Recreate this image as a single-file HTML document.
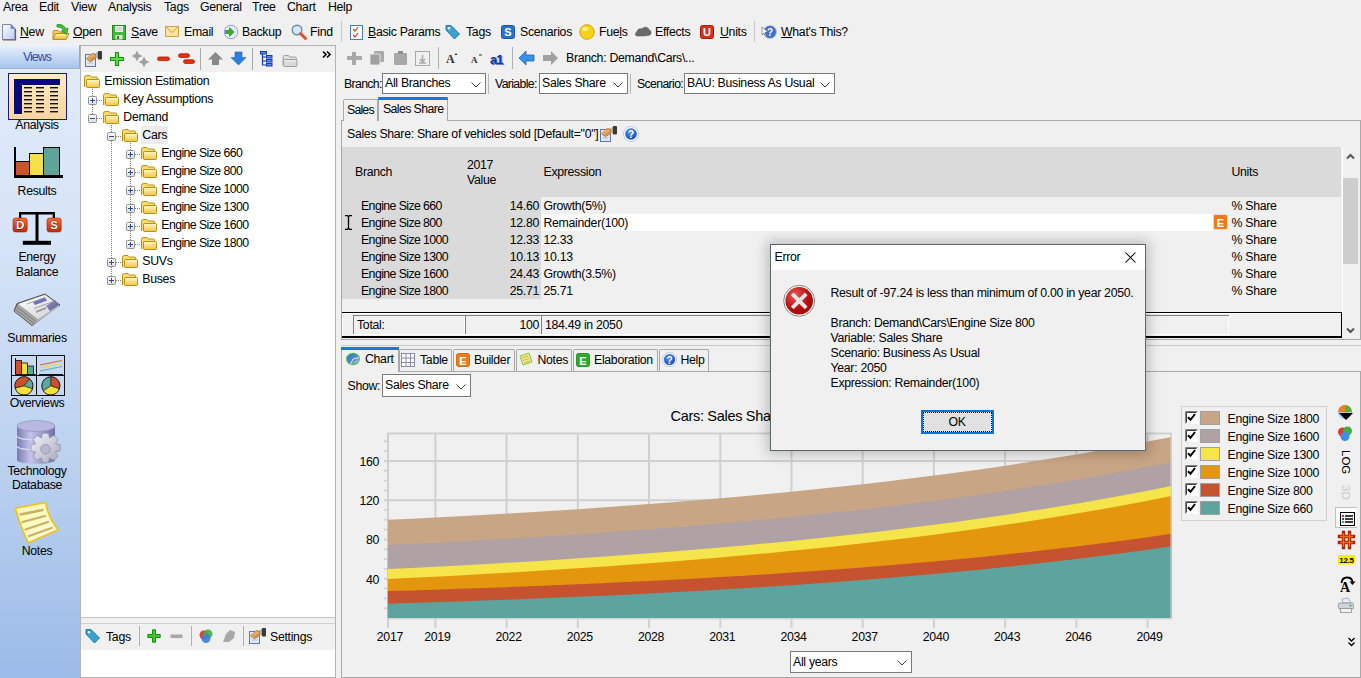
<!DOCTYPE html><html><head><meta charset="utf-8"><style>
html,body{margin:0;padding:0;width:1361px;height:678px;overflow:hidden;background:#f0f0f0;position:relative;font-family:"Liberation Sans", sans-serif;font-size:12.3px;color:#000}
.t{position:absolute;white-space:nowrap;line-height:1.2;letter-spacing:-0.3px}
svg{overflow:visible}
</style></head><body>
<div class="t" style="left:3px;top:-0.13px;font-size:12.3px;color:#000;">Area</div>
<div class="t" style="left:39px;top:-0.13px;font-size:12.3px;color:#000;">Edit</div>
<div class="t" style="left:71px;top:-0.13px;font-size:12.3px;color:#000;">View</div>
<div class="t" style="left:108px;top:-0.13px;font-size:12.3px;color:#000;">Analysis</div>
<div class="t" style="left:164px;top:-0.13px;font-size:12.3px;color:#000;">Tags</div>
<div class="t" style="left:200px;top:-0.13px;font-size:12.3px;color:#000;">General</div>
<div class="t" style="left:252px;top:-0.13px;font-size:12.3px;color:#000;">Tree</div>
<div class="t" style="left:287px;top:-0.13px;font-size:12.3px;color:#000;">Chart</div>
<div class="t" style="left:328px;top:-0.13px;font-size:12.3px;color:#000;">Help</div>
<svg style="position:absolute;left:2px;top:24px" width="14" height="17" viewBox="0 0 14 17"><defs><linearGradient id="gn" x1="0" y1="0" x2="1" y2="1"><stop offset="0" stop-color="#fff"/><stop offset="1" stop-color="#b8c8f0"/></linearGradient></defs><path d="M.5 .5h8.5l4 4v11H.5z" fill="url(#gn)" stroke="#7888b0"/><path d="M9 .5v4h4" fill="#4a90e8" stroke="#6a88c0" stroke-width=".8"/><path d="M1 16h12.5V5" fill="none" stroke="#606078" stroke-width="1.2"/></svg>
<div class="t" style="left:20px;top:25.17px;font-size:12.3px;color:#000;"><u>N</u>ew</div>
<svg style="position:absolute;left:52px;top:23px" width="18" height="18" viewBox="0 0 18 18"><defs><linearGradient id="gop" x1="0" y1="0" x2="0" y2="1"><stop offset="0" stop-color="#fff4b0"/><stop offset="1" stop-color="#e8b830"/></linearGradient></defs><path d="M1 16.5V8.5q0-1 1-1h4l1.5 1.5h5v2" fill="#f0d060" stroke="#b8901a"/><path d="M1 16.5l2.5-6h13.5l-3 6z" fill="url(#gop)" stroke="#b8901a"/><path d="M5 1.5q6-1 9 4.5l2-1-1.5 6.5-5-3.5 2-.8q-2-3.5-6.5-3.2z" fill="#3cc030" stroke="#1f8a18" stroke-width=".7"/></svg>
<div class="t" style="left:73px;top:25.17px;font-size:12.3px;color:#000;"><u>O</u>pen</div>
<svg style="position:absolute;left:112px;top:25px" width="14" height="15" viewBox="0 0 14 15"><rect x=".5" y=".5" width="13" height="14" fill="#44b838" stroke="#2a8a22"/><rect x="3" y="1" width="8" height="6" fill="#f0f0f0"/><path d="M4 3h6M4 5h6" stroke="#b0b0b0" stroke-width=".8"/><rect x="3.5" y="10" width="7" height="4.5" fill="#d8e8d8"/><rect x="5" y="11" width="2" height="3" fill="#2a8a22"/></svg>
<div class="t" style="left:131px;top:25.17px;font-size:12.3px;color:#000;"><u>S</u>ave</div>
<svg style="position:absolute;left:165px;top:26px" width="14" height="12" viewBox="0 0 14 12"><rect x=".5" y=".5" width="13" height="10" fill="#f9e3a0" stroke="#c9a640"/><path d="M.5 .5l6.5 6 6.5-6" fill="none" stroke="#c9a640"/></svg>
<div class="t" style="left:184px;top:25.17px;font-size:12.3px;color:#000;">Email</div>
<svg style="position:absolute;left:223px;top:24px" width="15" height="16" viewBox="0 0 15 16"><circle cx="8" cy="8" r="6.8" fill="#e9eef7" stroke="#8fa1bf"/><path d="M2.5 6.5h4v-3l4.5 4.5-4.5 4.5v-3h-4z" fill="#35b030" stroke="#1f7a1c" stroke-width=".6"/></svg>
<div class="t" style="left:242px;top:25.17px;font-size:12.3px;color:#000;">Backup</div>
<svg style="position:absolute;left:291px;top:24px" width="16" height="16" viewBox="0 0 16 16"><circle cx="6" cy="6" r="4.8" fill="#d5e8f7" stroke="#6d8aa8" stroke-width="1.4"/><path d="M9.5 9.5l5 5" stroke="#e0502a" stroke-width="3" stroke-linecap="round"/></svg>
<div class="t" style="left:310px;top:25.17px;font-size:12.3px;color:#000;">Find</div>
<div style="position:absolute;left:341px;top:21px;width:1px;height:21px;background:#c8c8c8"></div>
<svg style="position:absolute;left:350px;top:25px" width="13" height="15" viewBox="0 0 13 15"><rect x=".5" y=".5" width="12" height="14" fill="#fff" stroke="#4a78c8"/><path d="M3 4l2 2 3-4M3 10l2 2 3-4" fill="none" stroke="#d23a2a" stroke-width="1.2"/></svg>
<div class="t" style="left:368px;top:25.17px;font-size:12.3px;color:#000;"><u>B</u>asic Params</div>
<svg style="position:absolute;left:445px;top:24px" width="16" height="16" viewBox="0 0 16 16"><path d="M1 6V1.5h5l8.5 8.5-5 5z" fill="#3aa0d0" stroke="#2378a8"/><circle cx="4" cy="4.3" r="1.2" fill="#fff"/></svg>
<div class="t" style="left:466px;top:25.17px;font-size:12.3px;color:#000;">Tags</div>
<svg style="position:absolute;left:501px;top:25px" width="14" height="14" viewBox="0 0 14 14"><rect x=".5" y=".5" width="13" height="13" rx="2" fill="#2a72d0" stroke="#1a52a0"/><text x="7" y="11.2" font-family="Liberation Sans" font-weight="bold" font-size="11" fill="#fff" text-anchor="middle">S</text></svg>
<div class="t" style="left:520px;top:25.17px;font-size:12.3px;color:#000;">Scenarios</div>
<svg style="position:absolute;left:579px;top:24px" width="16" height="16" viewBox="0 0 16 16"><circle cx="8" cy="8" r="7.3" fill="#f7d21a" stroke="#d6a800"/><ellipse cx="6" cy="5" rx="3" ry="2" fill="#fdf08a"/></svg>
<div class="t" style="left:599px;top:25.17px;font-size:12.3px;color:#000;">Fue<u>l</u>s</div>
<svg style="position:absolute;left:635px;top:26px" width="16" height="12" viewBox="0 0 16 12"><path d="M2 10c-2 0-2-4 0-4 0-3 3-4 5-3 2-3 7-2 7 1 2 0 3 3 1 5-2 1-11 1-13 1z" fill="#6a6a6a" stroke="#4a4a4a" stroke-width=".5"/></svg>
<div class="t" style="left:655px;top:25.17px;font-size:12.3px;color:#000;">Effects</div>
<svg style="position:absolute;left:700px;top:25px" width="14" height="14" viewBox="0 0 14 14"><rect x=".5" y=".5" width="13" height="13" rx="2" fill="#d8301e" stroke="#a01e10"/><text x="7" y="11.2" font-family="Liberation Sans" font-weight="bold" font-size="11" fill="#fff" text-anchor="middle">U</text></svg>
<div class="t" style="left:720px;top:25.17px;font-size:12.3px;color:#000;"><u>U</u>nits</div>
<div style="position:absolute;left:754px;top:21px;width:1px;height:21px;background:#c8c8c8"></div>
<svg style="position:absolute;left:761px;top:24px" width="16" height="16" viewBox="0 0 16 16"><circle cx="9" cy="8" r="6.5" fill="#3a6fd0" stroke="#b8c8e8"/><text x="9" y="12" font-family="Liberation Sans" font-weight="bold" font-size="10" fill="#fff" text-anchor="middle">?</text><path d="M1 3l6 5-3 .5 2 4-1 .5-2-4-2 2z" fill="#fff" stroke="#555" stroke-width=".6"/></svg>
<div class="t" style="left:781px;top:25.17px;font-size:12.3px;color:#000;"><u>W</u>hat's This?</div>
<div style="position:absolute;left:0px;top:45px;width:80px;height:633px;background:linear-gradient(#e2ecfa 0%,#d6e4f7 30%,#bcd2f0 65%,#9bbbe8 100%)"></div>
<div style="position:absolute;left:0px;top:45px;width:79px;height:23px;background:linear-gradient(#eaf2fd,#a6c4ee)"></div>
<div style="position:absolute;left:0px;top:68px;width:80px;height:1px;background:#a8b4c4"></div>
<div style="position:absolute;left:79px;top:45px;width:1px;height:23px;background:#a8a8a8"></div>
<div style="position:absolute;left:80px;top:45px;width:1px;height:633px;background:#b4b4b4"></div>
<div class="t" style="left:-63px;width:200px;text-align:center;top:49.87px;font-size:12.3px;color:#2a4fb0;letter-spacing:-0.9px">Views</div>
<svg style="position:absolute;left:8px;top:73px" width="60" height="48" viewBox="0 0 60 48"><defs><linearGradient id="ga" x1="0" y1="0" x2="0" y2="1"><stop offset="0" stop-color="#fdebc8"/><stop offset="1" stop-color="#fbd49a"/></linearGradient></defs><rect x=".5" y=".5" width="58" height="46" fill="url(#ga)" stroke="#1a1a80"/><path d="M6 6h46v6H14v29H6z" fill="#0a0a78"/><rect x="16" y="14" width="8" height="1.4" fill="#111"/><rect x="16" y="18" width="8" height="1.4" fill="#111"/><rect x="16" y="22" width="8" height="1.4" fill="#111"/><rect x="16" y="26" width="8" height="1.4" fill="#111"/><rect x="16" y="30" width="8" height="1.4" fill="#111"/><rect x="16" y="34" width="8" height="1.4" fill="#111"/><rect x="16" y="38" width="8" height="1.4" fill="#111"/><rect x="28" y="14" width="8" height="1.4" fill="#111"/><rect x="28" y="18" width="8" height="1.4" fill="#111"/><rect x="28" y="22" width="8" height="1.4" fill="#111"/><rect x="28" y="26" width="8" height="1.4" fill="#111"/><rect x="28" y="30" width="8" height="1.4" fill="#111"/><rect x="28" y="34" width="8" height="1.4" fill="#111"/><rect x="28" y="38" width="8" height="1.4" fill="#111"/><rect x="42" y="14" width="8" height="1.4" fill="#111"/><rect x="42" y="18" width="8" height="1.4" fill="#111"/><rect x="42" y="22" width="8" height="1.4" fill="#111"/><rect x="42" y="26" width="8" height="1.4" fill="#111"/><rect x="42" y="30" width="8" height="1.4" fill="#111"/><rect x="42" y="34" width="8" height="1.4" fill="#111"/><rect x="42" y="38" width="8" height="1.4" fill="#111"/></svg>
<div class="t" style="left:-63px;width:200px;text-align:center;top:118.17px;font-size:12.3px;color:#000;">Analysis</div>
<svg style="position:absolute;left:12px;top:145px" width="52" height="34" viewBox="0 0 52 34"><rect x="2" y="2" width="2" height="30" fill="#000"/><rect x="2" y="30" width="49" height="3" fill="#000"/><rect x="3.5" y="16.5" width="14" height="14" fill="#c9552e" stroke="#000"/><rect x="17.5" y="8.5" width="14" height="22" fill="#f4e04a" stroke="#000"/><rect x="31.5" y="2.5" width="16" height="28" fill="#5fa39b" stroke="#000"/></svg>
<div class="t" style="left:-63px;width:200px;text-align:center;top:183.87px;font-size:12.3px;color:#000;">Results</div>
<svg style="position:absolute;left:10px;top:211px" width="54" height="36" viewBox="0 0 54 36"><defs><linearGradient id="geb" x1="0" y1="0" x2="0" y2="1"><stop offset="0" stop-color="#f86a3a"/><stop offset="1" stop-color="#c02808"/></linearGradient></defs><rect x="9" y="1" width="36" height="2.5" fill="#000"/><rect x="9" y="1" width="2.3" height="7" fill="#000"/><rect x="42.7" y="1" width="2.3" height="7" fill="#000"/><rect x="25.5" y="1" width="3" height="31" fill="#000"/><rect x="12.8" y="29.8" width="28.2" height="4" fill="#000"/><rect x="3" y="7" width="14.2" height="14" rx="2.5" fill="url(#geb)" stroke="#a82000" stroke-width=".6"/><text x="10.1" y="18.3" font-family="Liberation Sans" font-weight="bold" font-size="11.5" fill="#fff" text-anchor="middle" stroke="#801800" stroke-width="1" paint-order="stroke">D</text><rect x="37" y="7" width="14.2" height="14" rx="2.5" fill="url(#geb)" stroke="#a82000" stroke-width=".6"/><text x="44.1" y="18.3" font-family="Liberation Sans" font-weight="bold" font-size="11.5" fill="#fff" text-anchor="middle" stroke="#801800" stroke-width="1" paint-order="stroke">S</text></svg>
<div class="t" style="left:-63px;width:200px;text-align:center;top:250.37px;font-size:12.3px;color:#000;">Energy</div>
<div class="t" style="left:-63px;width:200px;text-align:center;top:264.87px;font-size:12.3px;color:#000;">Balance</div>
<svg style="position:absolute;left:12px;top:292px" width="50" height="36" viewBox="0 0 50 36"><defs><linearGradient id="gs" x1="0" y1="0" x2="1" y2="1"><stop offset="0" stop-color="#ffffff"/><stop offset="1" stop-color="#d0d0d4"/></linearGradient><linearGradient id="gs2" x1="0" y1="0" x2="1" y2="1"><stop offset="0" stop-color="#9090c8"/><stop offset="1" stop-color="#606090"/></linearGradient></defs><path d="M5 11.5L33 2l15 11-28 20.5L2 19z" fill="#6a6a6a" stroke="#555" stroke-width="1" stroke-linejoin="round"/><path d="M6 12L33 2.8 47 13 26 27.5z" fill="url(#gs)"/><path d="M2.5 19L6 12l20 15.5-6 5.5z" fill="#a8a8a8"/><path d="M3.5 17.5l18 13.5M4.8 15l18.5 14" stroke="#707070" stroke-width=".9"/><path d="M26 27.5L47 13l.8 1.5L20.5 33z" fill="#c0c0c0"/><path d="M21 10l12-4.5 2 3-12 4.5z" fill="#7070c0"/><path d="M34 14l9-6 4 5-9 6z" fill="url(#gs2)"/><path d="M15 12l18-6.5M22 16.5l18-6.5" stroke="#909090" stroke-width=".8"/><path d="M24 20l10-4" stroke="#a0a0a0" stroke-width="2"/></svg>
<div class="t" style="left:-63px;width:200px;text-align:center;top:330.87px;font-size:12.3px;color:#000;">Summaries</div>
<svg style="position:absolute;left:10px;top:354px" width="56" height="44" viewBox="0 0 56 44"><rect x="1.5" y="1.5" width="53" height="40" fill="none" stroke="#111"/><path d="M26.5 1.5v40M1.5 21.5h53" stroke="#111"/><path d="M5.5 4v16.5h20" fill="none" stroke="#111"/><rect x="5.5" y="6.5" width="6" height="14" fill="#d0502a" stroke="#111" stroke-width=".8"/><rect x="11.5" y="9" width="6" height="11.5" fill="#f4e03a" stroke="#111" stroke-width=".8"/><rect x="17.5" y="12" width="6" height="8.5" fill="#5aa89a" stroke="#111" stroke-width=".8"/><path d="M29 20.5h24" stroke="#111"/><path d="M30 11L52 6.5" stroke="#e05a3a" stroke-width="1"/><path d="M30 14L52 9.5" stroke="#f0d830" stroke-width="1"/><path d="M30 17L52 12.5" stroke="#5ab0a8" stroke-width="1"/><g transform="translate(14,31.8)"><circle r="9" fill="#5aa89a" stroke="#111"/><path d="M0 0L-8.7 2.3A9 9 0 0 1 5.5-7.1Z" fill="#d0502a" stroke="#111" stroke-width=".7"/><path d="M0 0L8.5 3A9 9 0 0 1-8.7 2.3Z" fill="#f4e03a" stroke="#111" stroke-width=".7"/></g><g transform="translate(40.8,31.8)"><circle r="9" fill="#5aa89a" stroke="#111"/><path d="M0 0V-9A9 9 0 0 1 8.5 3Z" fill="#d0502a" stroke="#111" stroke-width=".7"/><path d="M0 0L8.5 3A9 9 0 0 1-7.5 5Z" fill="#f4e03a" stroke="#111" stroke-width=".7"/></g></svg>
<div class="t" style="left:-63px;width:200px;text-align:center;top:396.37px;font-size:12.3px;color:#000;">Overviews</div>
<svg style="position:absolute;left:15px;top:419px" width="48" height="46" viewBox="0 0 48 46"><defs><linearGradient id="gd" x1="0" x2="1"><stop offset="0" stop-color="#7a7ab0"/><stop offset=".35" stop-color="#c4c4ec"/><stop offset="1" stop-color="#7070a8"/></linearGradient><linearGradient id="gg" x1="0" y1="0" x2="1" y2="1"><stop offset="0" stop-color="#f4f4fa"/><stop offset="1" stop-color="#a8a8c0"/></linearGradient></defs><path d="M2 7v34c0 5 38 5 38 0V7z" fill="url(#gd)"/><ellipse cx="21" cy="7" rx="19" ry="5.5" fill="#b8b8e0" stroke="#8a8ab8" stroke-width=".6"/><path d="M2 17c0 5 38 5 38 0M2 27c0 5 38 5 38 0" fill="none" stroke="#dcdcf4" stroke-width="1.1"/><g transform="translate(30.5,29) scale(1.18)"><path d="M-2.5-14h5l1 4 3.5-2.2 3.6 3.6L8.4-5.1l4 1v5l-4 1 2.2 3.5-3.6 3.6L3.5 6.8l-1 4.2h-5l-1-4.2-3.5 2.2-3.6-3.6L-8.4 2l-4-1v-5l4-1-2.2-3.5 3.6-3.6L-3.5-10z" fill="url(#gg)" stroke="#9090a8" stroke-width=".7" transform="translate(0,1.5)"/><circle cy="1" r="4" fill="#b8b8cc" stroke="#9090a8" stroke-width=".7"/></g></svg>
<div class="t" style="left:-63px;width:200px;text-align:center;top:463.87px;font-size:12.3px;color:#000;">Technology</div>
<div class="t" style="left:-63px;width:200px;text-align:center;top:478.37px;font-size:12.3px;color:#000;">Database</div>
<svg style="position:absolute;left:13px;top:500px" width="50" height="46" viewBox="0 0 50 46"><defs><linearGradient id="gno" x1="0" y1="0" x2="1" y2="1"><stop offset="0" stop-color="#fff8a8"/><stop offset="1" stop-color="#fffce0"/></linearGradient></defs><path d="M2.4 8.3L32.7 2.5Q35 18 45.3 29.7L15.4 42.8Q7 26 2.4 8.3z" fill="url(#gno)" stroke="#f0c018" stroke-width="1.6" stroke-linejoin="round"/><path d="M7.5 14.5L29.5 10M9.5 22L32 16M12.5 29.5L35 22M16 36L38.5 28" stroke="#c8b068" stroke-width="2.3" stroke-linecap="round"/></svg>
<div class="t" style="left:-63px;width:200px;text-align:center;top:544.37px;font-size:12.3px;color:#000;">Notes</div>
<div style="position:absolute;left:81px;top:45px;width:255px;height:633px;background:#f0f0f0"></div>
<div style="position:absolute;left:80px;top:45px;width:256px;height:1px;background:#b4b4b4"></div>
<div style="position:absolute;left:335px;top:45px;width:1px;height:633px;background:#b4b4b4"></div>
<div style="position:absolute;left:81px;top:72px;width:254px;height:545px;background:#fff"></div>
<div style="position:absolute;left:81px;top:617px;width:254px;height:1px;background:#c4c4c4"></div>
<div style="position:absolute;left:81px;top:623px;width:254px;height:1px;background:#d0d0d0"></div>
<div style="position:absolute;left:81px;top:650px;width:254px;height:27px;background:#fff"></div>
<div style="position:absolute;left:80px;top:677px;width:256px;height:1px;background:#b4b4b4"></div>
<svg style="position:absolute;left:85px;top:50px" width="18" height="17" viewBox="0 0 18 17"><rect x=".5" y="4.5" width="10" height="12" fill="#dceaf8" stroke="#6870b0"/><path d="M2.5 10.5h6M2.5 13h6" stroke="#a8c4e4" stroke-width="1.2"/><path d="M1.5 8.5L7 3.5l4 .5.5 3.5-6 4.5z" fill="#d89040" stroke="#a06020" stroke-width=".5"/><path d="M3 8l2 2M5 6l2 2M7 4.5l2 2M4 6.5l-1.5 1.5M6.5 4.5l-2.5 2.5M9 5L5.5 8.5" stroke="#f8d8a0" stroke-width=".7"/><rect x="11" y="2.5" width="2" height="5.5" fill="#b8b8b8"/><rect x="12.8" y="1" width="4.2" height="8.5" rx="1" fill="#3a3a3a"/></svg>
<svg style="position:absolute;left:109px;top:51px" width="16" height="16" viewBox="0 0 16 16"><path d="M6.5 1.5h3v5h5v3h-5v5h-3v-5h-5v-3h5z" fill="#5ce040" stroke="#1a9010" stroke-width="1.1" stroke-linejoin="round"/></svg>
<svg style="position:absolute;left:132px;top:50px" width="17" height="17" viewBox="0 0 17 17"><path d="M5 .5l1.8 3.7L10.5 6 6.8 7.8 5 11.5 3.2 7.8-.5 6l3.7-1.8z" fill="#a0a0a0"/><path d="M12 6.5l1.8 3.7 3.7 1.8-3.7 1.8L12 17.5l-1.8-3.7L6.5 12l3.7-1.8z" fill="#a0a0a0"/></svg>
<svg style="position:absolute;left:157px;top:56px" width="13" height="6" viewBox="0 0 13 6"><rect x=".5" y="1" width="12" height="3.6" rx="1.8" fill="#e8300c" stroke="#a01800" stroke-width=".8"/></svg>
<svg style="position:absolute;left:178px;top:53px" width="17" height="12" viewBox="0 0 17 12"><rect x=".5" y=".8" width="11" height="3.6" rx="1.8" fill="#e8300c" stroke="#a01800" stroke-width=".8"/><rect x="5.5" y="6.8" width="11" height="3.6" rx="1.8" fill="#e8300c" stroke="#a01800" stroke-width=".8"/></svg>
<div style="position:absolute;left:200px;top:48px;width:1px;height:22px;background:#a8a8a8"></div>
<svg style="position:absolute;left:208px;top:52px" width="15" height="13" viewBox="0 0 15 13"><path d="M7.5 0L15 7.5h-4V13H4V7.5H0z" fill="#8a8a8a"/></svg>
<svg style="position:absolute;left:231px;top:52px" width="15" height="13" viewBox="0 0 15 13"><path d="M4 0h7v5.5h4L7.5 13 0 5.5h4z" fill="#2a80e0" stroke="#1a60b8" stroke-width=".6"/></svg>
<div style="position:absolute;left:252px;top:48px;width:1px;height:22px;background:#a8a8a8"></div>
<svg style="position:absolute;left:260px;top:51px" width="13" height="15" viewBox="0 0 13 15"><g fill="#5a90e8" stroke="#1438a8" stroke-width="1"><rect x=".5" y=".5" width="6" height="2.5"/><rect x="6.5" y="4.5" width="5.5" height="2.5"/><rect x="6.5" y="8.5" width="5.5" height="2.5"/><rect x="6.5" y="12.5" width="5.5" height="2.5"/></g><path d="M2.5 3v11h4M2.5 6h4M2.5 10h4" fill="none" stroke="#1438a8" stroke-width="1.2"/></svg>
<svg style="position:absolute;left:282px;top:54px" width="16" height="13" viewBox="0 0 16 13"><path d="M1 11.5V3q0-1.5 1.5-1.5h4l1.5 1.5h5q1.5 0 1.5 1.5V6" fill="#e0e0e0" stroke="#a0a0a0"/><rect x="1.5" y="5.5" width="13.5" height="7" rx="1" fill="#d8d8d8" stroke="#a0a0a0"/><path d="M2.5 7h11.5" stroke="#f4f4f4"/></svg>
<svg style="position:absolute;left:322px;top:51px" width="9" height="7" viewBox="0 0 9 7"><path d="M1 .5l3 3-3 3M5 .5l3 3-3 3" fill="none" stroke="#000" stroke-width="1.6"/></svg>
<svg width="0" height="0" style="position:absolute"><defs><linearGradient id="gf" x1="0" y1="0" x2="0" y2="1"><stop offset="0" stop-color="#fff8c8"/><stop offset="1" stop-color="#f0c440"/></linearGradient><linearGradient id="gx" x1="0" y1="0" x2="0" y2="1"><stop offset="0" stop-color="#fff"/><stop offset="1" stop-color="#dcdcdc"/></linearGradient><symbol id="folder" viewBox="0 0 16 13"><path d="M.5 12V2.5Q.5.5 2.5.5H6l1.5 1.5h5q1 0 1 1V5" fill="#f8dc70" stroke="#b8901a"/><rect x="2.5" y="4.5" width="13" height="8" rx=".8" fill="url(#gf)" stroke="#b8901a"/></symbol><symbol id="plus" viewBox="0 0 9 9"><rect x=".5" y=".5" width="8" height="8" rx="1" fill="url(#gx)" stroke="#909090"/><path d="M2 4.5h5M4.5 2v5" stroke="#2a4a9a"/></symbol><symbol id="minus" viewBox="0 0 9 9"><rect x=".5" y=".5" width="8" height="8" rx="1" fill="url(#gx)" stroke="#909090"/><path d="M2 4.5h5" stroke="#2a4a9a"/></symbol></defs></svg>
<div style="position:absolute;left:92px;top:89px;width:1px;height:28px;background:repeating-linear-gradient(#808080 0 1px,transparent 1px 2px)"></div>
<div style="position:absolute;left:111px;top:125px;width:1px;height:154px;background:repeating-linear-gradient(#808080 0 1px,transparent 1px 2px)"></div>
<div style="position:absolute;left:130px;top:143px;width:1px;height:100px;background:repeating-linear-gradient(#808080 0 1px,transparent 1px 2px)"></div>
<svg style="position:absolute;left:84px;top:75px" width="16" height="13"><use href="#folder"/></svg>
<div class="t" style="left:104.3px;top:73.87px;font-size:12.3px;color:#000;">Emission Estimation</div>
<div style="position:absolute;left:97px;top:100px;width:6px;height:1px;background:repeating-linear-gradient(90deg,#808080 0 1px,transparent 1px 2px)"></div>
<svg style="position:absolute;left:88px;top:96px" width="9" height="9"><use href="#plus"/></svg>
<svg style="position:absolute;left:103px;top:93px" width="16" height="13"><use href="#folder"/></svg>
<div class="t" style="left:123.3px;top:91.87px;font-size:12.3px;color:#000;">Key Assumptions</div>
<div style="position:absolute;left:97px;top:118px;width:6px;height:1px;background:repeating-linear-gradient(90deg,#808080 0 1px,transparent 1px 2px)"></div>
<svg style="position:absolute;left:88px;top:114px" width="9" height="9"><use href="#minus"/></svg>
<svg style="position:absolute;left:103px;top:111px" width="16" height="13"><use href="#folder"/></svg>
<div class="t" style="left:123.3px;top:109.87px;font-size:12.3px;color:#000;">Demand</div>
<div style="position:absolute;left:116px;top:136px;width:6px;height:1px;background:repeating-linear-gradient(90deg,#808080 0 1px,transparent 1px 2px)"></div>
<svg style="position:absolute;left:107px;top:132px" width="9" height="9"><use href="#minus"/></svg>
<svg style="position:absolute;left:122px;top:129px" width="16" height="13"><use href="#folder"/></svg>
<div style="position:absolute;left:141px;top:126px;width:27px;height:18px;background:#ececec"></div>
<div class="t" style="left:142.3px;top:127.87px;font-size:12.3px;color:#000;">Cars</div>
<div style="position:absolute;left:135px;top:154px;width:6px;height:1px;background:repeating-linear-gradient(90deg,#808080 0 1px,transparent 1px 2px)"></div>
<svg style="position:absolute;left:126px;top:150px" width="9" height="9"><use href="#plus"/></svg>
<svg style="position:absolute;left:141px;top:147px" width="16" height="13"><use href="#folder"/></svg>
<div class="t" style="left:161.3px;top:145.87px;font-size:12.3px;color:#000;letter-spacing:-0.58px">Engine Size 660</div>
<div style="position:absolute;left:135px;top:172px;width:6px;height:1px;background:repeating-linear-gradient(90deg,#808080 0 1px,transparent 1px 2px)"></div>
<svg style="position:absolute;left:126px;top:168px" width="9" height="9"><use href="#plus"/></svg>
<svg style="position:absolute;left:141px;top:165px" width="16" height="13"><use href="#folder"/></svg>
<div class="t" style="left:161.3px;top:163.87px;font-size:12.3px;color:#000;letter-spacing:-0.58px">Engine Size 800</div>
<div style="position:absolute;left:135px;top:190px;width:6px;height:1px;background:repeating-linear-gradient(90deg,#808080 0 1px,transparent 1px 2px)"></div>
<svg style="position:absolute;left:126px;top:186px" width="9" height="9"><use href="#plus"/></svg>
<svg style="position:absolute;left:141px;top:183px" width="16" height="13"><use href="#folder"/></svg>
<div class="t" style="left:161.3px;top:181.87px;font-size:12.3px;color:#000;letter-spacing:-0.58px">Engine Size 1000</div>
<div style="position:absolute;left:135px;top:208px;width:6px;height:1px;background:repeating-linear-gradient(90deg,#808080 0 1px,transparent 1px 2px)"></div>
<svg style="position:absolute;left:126px;top:204px" width="9" height="9"><use href="#plus"/></svg>
<svg style="position:absolute;left:141px;top:201px" width="16" height="13"><use href="#folder"/></svg>
<div class="t" style="left:161.3px;top:199.87px;font-size:12.3px;color:#000;letter-spacing:-0.58px">Engine Size 1300</div>
<div style="position:absolute;left:135px;top:226px;width:6px;height:1px;background:repeating-linear-gradient(90deg,#808080 0 1px,transparent 1px 2px)"></div>
<svg style="position:absolute;left:126px;top:222px" width="9" height="9"><use href="#plus"/></svg>
<svg style="position:absolute;left:141px;top:219px" width="16" height="13"><use href="#folder"/></svg>
<div class="t" style="left:161.3px;top:217.87px;font-size:12.3px;color:#000;letter-spacing:-0.58px">Engine Size 1600</div>
<div style="position:absolute;left:135px;top:244px;width:6px;height:1px;background:repeating-linear-gradient(90deg,#808080 0 1px,transparent 1px 2px)"></div>
<svg style="position:absolute;left:126px;top:240px" width="9" height="9"><use href="#plus"/></svg>
<svg style="position:absolute;left:141px;top:237px" width="16" height="13"><use href="#folder"/></svg>
<div class="t" style="left:161.3px;top:235.87px;font-size:12.3px;color:#000;letter-spacing:-0.58px">Engine Size 1800</div>
<div style="position:absolute;left:116px;top:262px;width:6px;height:1px;background:repeating-linear-gradient(90deg,#808080 0 1px,transparent 1px 2px)"></div>
<svg style="position:absolute;left:107px;top:258px" width="9" height="9"><use href="#plus"/></svg>
<svg style="position:absolute;left:122px;top:255px" width="16" height="13"><use href="#folder"/></svg>
<div class="t" style="left:142.3px;top:253.87px;font-size:12.3px;color:#000;">SUVs</div>
<div style="position:absolute;left:116px;top:280px;width:6px;height:1px;background:repeating-linear-gradient(90deg,#808080 0 1px,transparent 1px 2px)"></div>
<svg style="position:absolute;left:107px;top:276px" width="9" height="9"><use href="#plus"/></svg>
<svg style="position:absolute;left:122px;top:273px" width="16" height="13"><use href="#folder"/></svg>
<div class="t" style="left:142.3px;top:271.87px;font-size:12.3px;color:#000;">Buses</div>
<svg style="position:absolute;left:85px;top:628px" width="16" height="16" viewBox="0 0 16 16"><path d="M1 6V1.5h5l8.5 8.5-5 5z" fill="#3aa0d0" stroke="#2378a8"/><circle cx="4" cy="4.3" r="1.2" fill="#fff"/></svg>
<div class="t" style="left:106px;top:629.87px;font-size:12.3px;color:#000;">Tags</div>
<div style="position:absolute;left:139px;top:626px;width:1px;height:20px;background:#b0b0b0"></div>
<svg style="position:absolute;left:147px;top:629px" width="14" height="14" viewBox="0 0 14 14"><path d="M5.5 .8h3v4.7h4.7v3H8.5v4.7h-3V8.5H.8v-3h4.7z" fill="#3cc82a" stroke="#1a8a10" stroke-width="1"/></svg>
<svg style="position:absolute;left:170px;top:634px" width="13" height="5" viewBox="0 0 13 5"><rect x=".5" y=".5" width="12" height="3.5" fill="#a8a8a8"/></svg>
<div style="position:absolute;left:191px;top:626px;width:1px;height:20px;background:#b0b0b0"></div>
<svg style="position:absolute;left:198px;top:628px" width="16" height="16" viewBox="0 0 16 16"><circle cx="6" cy="7" r="4.5" fill="#e04030"/><circle cx="10" cy="6" r="4.5" fill="#40b040" opacity=".9"/><circle cx="8" cy="10.5" r="4.5" fill="#3a80e0" opacity=".9"/></svg>
<svg style="position:absolute;left:221px;top:628px" width="16" height="16" viewBox="0 0 16 16"><path d="M2 14l3-8 4-4 5 2-1 6-5 4z" fill="#a8a8a8"/></svg>
<div style="position:absolute;left:243px;top:626px;width:1px;height:20px;background:#b0b0b0"></div>
<svg style="position:absolute;left:249px;top:627px" width="18" height="17" viewBox="0 0 18 17"><rect x=".5" y="4.5" width="10" height="12" fill="#dceaf8" stroke="#6870b0"/><path d="M2.5 10.5h6M2.5 13h6" stroke="#a8c4e4" stroke-width="1.2"/><path d="M1.5 8.5L7 3.5l4 .5.5 3.5-6 4.5z" fill="#d89040" stroke="#a06020" stroke-width=".5"/><path d="M3 8l2 2M5 6l2 2M7 4.5l2 2M4 6.5l-1.5 1.5M6.5 4.5l-2.5 2.5M9 5L5.5 8.5" stroke="#f8d8a0" stroke-width=".7"/><rect x="11" y="2.5" width="2" height="5.5" fill="#b8b8b8"/><rect x="12.8" y="1" width="4.2" height="8.5" rx="1" fill="#3a3a3a"/></svg>
<div class="t" style="left:270px;top:629.87px;font-size:12.3px;color:#000;">Settings</div>
<svg style="position:absolute;left:347px;top:52px" width="15" height="13" viewBox="0 0 15 13"><path d="M5 0h4v4h6v4H9v5H5V8H0V4h5z" fill="#a8a8a8"/></svg>
<svg style="position:absolute;left:370px;top:51px" width="15" height="14" viewBox="0 0 15 14"><rect x="4" y="0" width="10" height="11" rx="1" fill="#a8a8a8"/><rect x="0" y="3" width="10" height="11" rx="1" fill="#a0a0a0" stroke="#f0f0f0" stroke-width=".8"/></svg>
<svg style="position:absolute;left:394px;top:51px" width="14" height="14" viewBox="0 0 14 14"><rect x="0" y="2" width="13" height="12" rx="1" fill="#a8a8a8"/><rect x="4" y="0" width="5" height="3" fill="#909090"/></svg>
<svg style="position:absolute;left:415px;top:51px" width="15" height="15" viewBox="0 0 15 15"><rect x=".5" y=".5" width="14" height="14" fill="#f0f0f0" stroke="#a8a8a8"/><path d="M7.5 4v6M5 8l2.5 3 2.5-3M4 12h7" fill="none" stroke="#a8a8a8" stroke-width="1.4"/></svg>
<div style="position:absolute;left:438px;top:47px;width:1px;height:22px;background:#b0b0b0"></div>
<svg style="position:absolute;left:446px;top:52px" width="13" height="12" viewBox="0 0 13 12"><text x="0" y="11" font-family="Liberation Serif" font-weight="bold" font-size="12" fill="#333">A</text><path d="M10 1l1.5 2h-3z" fill="#333"/></svg>
<svg style="position:absolute;left:471px;top:54px" width="11" height="10" viewBox="0 0 11 10"><text x="0" y="9" font-family="Liberation Serif" font-weight="bold" font-size="9" fill="#333">A</text><path d="M8 1h3" stroke="#333"/></svg>
<svg style="position:absolute;left:490px;top:50px" width="16" height="16" viewBox="0 0 16 16"><text x="0" y="13.5" font-family="Liberation Sans" font-weight="bold" font-size="13" fill="#0a2a90" letter-spacing="-1">a1</text><text x="1" y="14.5" font-family="Liberation Sans" font-weight="bold" font-size="13" fill="#2050d0" letter-spacing="-1" opacity=".7">a1</text></svg>
<div style="position:absolute;left:512px;top:47px;width:1px;height:22px;background:#b0b0b0"></div>
<svg style="position:absolute;left:519px;top:51px" width="15" height="14" viewBox="0 0 15 14"><path d="M0 7L7 0v4h8v6H7v4z" fill="#3a90e8" stroke="#1a68c0" stroke-width=".8"/></svg>
<svg style="position:absolute;left:543px;top:51px" width="15" height="14" viewBox="0 0 15 14"><path d="M15 7L8 0v4H0v6h8v4z" fill="#a0a0a0"/></svg>
<div class="t" style="left:566px;top:50.87px;font-size:12.3px;color:#000;">Branch: Demand\Cars\...</div>
<div class="t" style="left:344px;top:76.87px;font-size:12.3px;color:#000;letter-spacing:-0.65px">Branch:</div>
<div style="position:absolute;left:382px;top:73px;width:104px;height:21px;background:#fff;border:1px solid #7a7a7a;box-sizing:border-box"></div>
<div class="t" style="left:385px;top:76.37px;font-size:12.3px;color:#000;">All Branches</div>
<svg style="position:absolute;left:471px;top:81.5px" width="10" height="6" viewBox="0 0 10 6"><path d="M.5 .5l4.5 4.5 4.5-4.5" fill="none" stroke="#404040" stroke-width="1"/></svg>
<div style="position:absolute;left:488px;top:74px;width:1px;height:20px;background:#b8b8b8"></div>
<div class="t" style="left:495px;top:76.87px;font-size:12.3px;color:#000;letter-spacing:-0.65px">Variable:</div>
<div style="position:absolute;left:539px;top:73px;width:89px;height:21px;background:#fff;border:1px solid #7a7a7a;box-sizing:border-box"></div>
<div class="t" style="left:542px;top:76.37px;font-size:12.3px;color:#000;">Sales Share</div>
<svg style="position:absolute;left:613px;top:81.5px" width="10" height="6" viewBox="0 0 10 6"><path d="M.5 .5l4.5 4.5 4.5-4.5" fill="none" stroke="#404040" stroke-width="1"/></svg>
<div style="position:absolute;left:630px;top:74px;width:1px;height:20px;background:#b8b8b8"></div>
<div class="t" style="left:637px;top:76.87px;font-size:12.3px;color:#000;letter-spacing:-0.65px">Scenario:</div>
<div style="position:absolute;left:684px;top:73px;width:151px;height:21px;background:#fff;border:1px solid #7a7a7a;box-sizing:border-box"></div>
<div class="t" style="left:687px;top:76.37px;font-size:12.3px;color:#000;">BAU: Business As Usual</div>
<svg style="position:absolute;left:820px;top:81.5px" width="10" height="6" viewBox="0 0 10 6"><path d="M.5 .5l4.5 4.5 4.5-4.5" fill="none" stroke="#404040" stroke-width="1"/></svg>
<div style="position:absolute;left:341px;top:120px;width:1020px;height:220px;background:#f0f0f0;border:1px solid #a8a8a8;box-sizing:border-box"></div>
<div style="position:absolute;left:343px;top:99px;width:35px;height:22px;background:#f0f0f0;border:1px solid #a8a8a8;border-bottom:none;border-radius:2px 2px 0 0;box-sizing:border-box"></div>
<div class="t" style="left:347px;top:102.87px;font-size:12.3px;color:#000;letter-spacing:-0.8px">Sales</div>
<div style="position:absolute;left:378px;top:97px;width:70px;height:24px;background:#f0f0f0;border:1px solid #a8a8a8;border-bottom:none;box-sizing:border-box"></div>
<div style="position:absolute;left:378px;top:97px;width:70px;height:3px;background:#1a78d8;border-radius:2px 2px 0 0"></div>
<div class="t" style="left:383px;top:101.87px;font-size:12.3px;color:#000;letter-spacing:-0.6px">Sales Share</div>
<div class="t" style="left:347px;top:126.87px;font-size:12.3px;color:#000;">Sales Share: Share of vehicles sold [Default="0"]</div>
<svg style="position:absolute;left:600px;top:125px" width="18" height="17" viewBox="0 0 18 17"><rect x=".5" y="4.5" width="10" height="12" fill="#dceaf8" stroke="#6870b0"/><path d="M2.5 10.5h6M2.5 13h6" stroke="#a8c4e4" stroke-width="1.2"/><path d="M1.5 8.5L7 3.5l4 .5.5 3.5-6 4.5z" fill="#d89040" stroke="#a06020" stroke-width=".5"/><path d="M3 8l2 2M5 6l2 2M7 4.5l2 2M4 6.5l-1.5 1.5M6.5 4.5l-2.5 2.5M9 5L5.5 8.5" stroke="#f8d8a0" stroke-width=".7"/><rect x="11" y="2.5" width="2" height="5.5" fill="#b8b8b8"/><rect x="12.8" y="1" width="4.2" height="8.5" rx="1" fill="#3a3a3a"/></svg>
<svg style="position:absolute;left:623px;top:126px" width="16" height="16" viewBox="0 0 16 16"><defs><radialGradient id="ghp" cx=".4" cy=".35" r=".7"><stop offset="0" stop-color="#5a90f0"/><stop offset="1" stop-color="#1848b8"/></radialGradient></defs><circle cx="8" cy="8" r="7.5" fill="#fff" stroke="#b8c8ec" stroke-width="1"/><circle cx="8" cy="8" r="5.8" fill="url(#ghp)"/><text x="8" y="12" font-family="Liberation Sans" font-weight="bold" font-size="10" fill="#fff" text-anchor="middle">?</text></svg>
<div style="position:absolute;left:342px;top:147px;width:999px;height:50px;background:#dadada"></div>
<div class="t" style="left:355px;top:164.87px;font-size:12.3px;color:#000;">Branch</div>
<div class="t" style="left:467px;top:157.87px;font-size:12.3px;color:#000;">2017</div>
<div class="t" style="left:467px;top:172.87px;font-size:12.3px;color:#000;">Value</div>
<div class="t" style="left:543.5px;top:164.87px;font-size:12.3px;color:#000;">Expression</div>
<div class="t" style="left:1231.5px;top:164.87px;font-size:12.3px;color:#000;">Units</div>
<div style="position:absolute;left:342px;top:197px;width:199px;height:102px;background:#dadada"></div>
<div style="position:absolute;left:541px;top:214px;width:672px;height:17px;background:#fff"></div>
<div class="t" style="left:361px;top:198.67px;font-size:12.3px;color:#000;letter-spacing:-0.58px">Engine Size 660</div>
<div class="t" style="right:822px;top:198.67px;font-size:12.3px;color:#000;">14.60</div>
<div class="t" style="left:543.5px;top:198.67px;font-size:12.3px;color:#000;">Growth(5%)</div>
<div class="t" style="left:1231.5px;top:198.67px;font-size:12.3px;color:#000;">% Share</div>
<div class="t" style="left:361px;top:215.67px;font-size:12.3px;color:#000;letter-spacing:-0.58px">Engine Size 800</div>
<div class="t" style="right:822px;top:215.67px;font-size:12.3px;color:#000;">12.80</div>
<div class="t" style="left:543.5px;top:215.67px;font-size:12.3px;color:#000;">Remainder(100)</div>
<div class="t" style="left:1231.5px;top:215.67px;font-size:12.3px;color:#000;">% Share</div>
<div class="t" style="left:361px;top:232.67px;font-size:12.3px;color:#000;letter-spacing:-0.58px">Engine Size 1000</div>
<div class="t" style="right:822px;top:232.67px;font-size:12.3px;color:#000;">12.33</div>
<div class="t" style="left:543.5px;top:232.67px;font-size:12.3px;color:#000;">12.33</div>
<div class="t" style="left:1231.5px;top:232.67px;font-size:12.3px;color:#000;">% Share</div>
<div class="t" style="left:361px;top:249.67px;font-size:12.3px;color:#000;letter-spacing:-0.58px">Engine Size 1300</div>
<div class="t" style="right:822px;top:249.67px;font-size:12.3px;color:#000;">10.13</div>
<div class="t" style="left:543.5px;top:249.67px;font-size:12.3px;color:#000;">10.13</div>
<div class="t" style="left:1231.5px;top:249.67px;font-size:12.3px;color:#000;">% Share</div>
<div class="t" style="left:361px;top:266.67px;font-size:12.3px;color:#000;letter-spacing:-0.58px">Engine Size 1600</div>
<div class="t" style="right:822px;top:266.67px;font-size:12.3px;color:#000;">24.43</div>
<div class="t" style="left:543.5px;top:266.67px;font-size:12.3px;color:#000;">Growth(3.5%)</div>
<div class="t" style="left:1231.5px;top:266.67px;font-size:12.3px;color:#000;">% Share</div>
<div class="t" style="left:361px;top:283.67px;font-size:12.3px;color:#000;letter-spacing:-0.58px">Engine Size 1800</div>
<div class="t" style="right:822px;top:283.67px;font-size:12.3px;color:#000;">25.71</div>
<div class="t" style="left:543.5px;top:283.67px;font-size:12.3px;color:#000;">25.71</div>
<div class="t" style="left:1231.5px;top:283.67px;font-size:12.3px;color:#000;">% Share</div>
<svg style="position:absolute;left:1213px;top:214px" width="15" height="16" viewBox="0 0 15 16"><rect x=".5" y=".5" width="14" height="15" fill="#c8c8c8"/><rect x="1" y="1" width="13" height="14" rx="1.5" fill="#f07a18"/><text x="7.5" y="12.5" font-family="Liberation Sans" font-weight="bold" font-size="11" fill="#fff" text-anchor="middle">E</text></svg>
<svg style="position:absolute;left:344px;top:215px" width="9" height="15" viewBox="0 0 9 15"><path d="M1 .7h2.5l1 1 1-1H8M4.5 1.5v12M1 14.3h2.5l1-1 1 1H8" fill="none" stroke="#000" stroke-width="1.3"/></svg>
<div style="position:absolute;left:342px;top:312px;width:1000px;height:1px;background:#000"></div>
<div style="position:absolute;left:342px;top:313px;width:999px;height:1px;background:#fff"></div>
<div style="position:absolute;left:342px;top:313px;width:1px;height:23px;background:#fff"></div>
<div style="position:absolute;left:342px;top:336px;width:1000px;height:2px;background:#000"></div>
<div style="position:absolute;left:1341px;top:312px;width:1px;height:26px;background:#000"></div>
<div style="position:absolute;left:353px;top:315px;width:112px;height:1px;background:#808080"></div>
<div style="position:absolute;left:353px;top:315px;width:1px;height:19px;background:#808080"></div>
<div style="position:absolute;left:464px;top:316px;width:1px;height:18px;background:#fff"></div>
<div style="position:absolute;left:354px;top:334px;width:111px;height:1px;background:#fff"></div>
<div style="position:absolute;left:465px;top:315px;width:76px;height:1px;background:#808080"></div>
<div style="position:absolute;left:465px;top:315px;width:1px;height:19px;background:#808080"></div>
<div style="position:absolute;left:540px;top:316px;width:1px;height:18px;background:#fff"></div>
<div style="position:absolute;left:466px;top:334px;width:75px;height:1px;background:#fff"></div>
<div style="position:absolute;left:541px;top:315px;width:688px;height:1px;background:#808080"></div>
<div style="position:absolute;left:541px;top:315px;width:1px;height:19px;background:#808080"></div>
<div style="position:absolute;left:1228px;top:316px;width:1px;height:18px;background:#fff"></div>
<div style="position:absolute;left:542px;top:334px;width:687px;height:1px;background:#fff"></div>
<div class="t" style="left:357px;top:317.87px;font-size:12.3px;color:#000;">Total:</div>
<div class="t" style="right:822px;top:317.87px;font-size:12.3px;color:#000;">100</div>
<div class="t" style="left:545px;top:317.87px;font-size:12.3px;color:#000;">184.49 in 2050</div>
<div style="position:absolute;left:1342px;top:147px;width:17px;height:192px;background:#f0f0f0"></div>
<div style="position:absolute;left:1342px;top:147px;width:1px;height:165px;background:#fff"></div>
<svg style="position:absolute;left:1346px;top:152.5px" width="9" height="7" viewBox="0 0 9 7"><path d="M1 5.5L4.5 2 8 5.5" fill="none" stroke="#555" stroke-width="2"/></svg>
<div style="position:absolute;left:1343px;top:178px;width:15px;height:86px;background:#cdcdcd"></div>
<svg style="position:absolute;left:1346px;top:327px" width="9" height="7" viewBox="0 0 9 7"><path d="M1 1.5L4.5 5 8 1.5" fill="none" stroke="#555" stroke-width="2"/></svg>
<div style="position:absolute;left:341px;top:345px;width:1020px;height:1px;background:#c8c8c8"></div>
<div style="position:absolute;left:341px;top:371px;width:1020px;height:307px;background:#f0f0f0;border:1px solid #a8a8a8;box-sizing:border-box"></div>
<div style="position:absolute;left:341px;top:347px;width:58px;height:25px;background:#f0f0f0;border:1px solid #a8a8a8;border-bottom:none;box-sizing:border-box"></div>
<div style="position:absolute;left:341px;top:347px;width:58px;height:3px;background:#1a78d8"></div>

<svg style="position:absolute;left:346px;top:353px" width="14" height="12" viewBox="0 0 14 12"><defs><linearGradient id="gch" x1="0" y1="0" x2="1" y2="1"><stop offset="0" stop-color="#2a6ad0"/><stop offset=".6" stop-color="#5a8ad8"/><stop offset="1" stop-color="#f0f0f8"/></linearGradient></defs><ellipse cx="7" cy="6" rx="6.3" ry="5.6" fill="url(#gch)" stroke="#40c040" stroke-width="1.2"/><path d="M7 6l6-1.5M7 6l-2.5 5.5" stroke="#e8e8f0" stroke-width="1"/></svg>
<div class="t" style="left:365px;top:351.87px;font-size:12.3px;color:#000;">Chart</div>
<div style="position:absolute;left:399px;top:349px;width:53px;height:22px;background:#f0f0f0;border:1px solid #a8a8a8;border-bottom:none;border-radius:2px 2px 0 0;box-sizing:border-box"></div>

<svg style="position:absolute;left:401px;top:353px" width="14" height="14" viewBox="0 0 14 14"><rect x=".5" y=".5" width="13" height="13" fill="#fff" stroke="#8a8ab8"/><path d="M5 .5v13M9.5 .5v13M.5 5h13M.5 9.5h13" stroke="#8a8ab8"/></svg>
<div class="t" style="left:420px;top:352.87px;font-size:12.3px;color:#000;">Table</div>
<div style="position:absolute;left:453px;top:349px;width:62px;height:22px;background:#f0f0f0;border:1px solid #a8a8a8;border-bottom:none;border-radius:2px 2px 0 0;box-sizing:border-box"></div>

<svg style="position:absolute;left:456px;top:353px" width="14" height="14" viewBox="0 0 14 14"><rect x=".5" y=".5" width="13" height="13" rx="2" fill="#f07a18" stroke="#c05a08" stroke-width=".8"/><text x="7" y="11.5" font-family="Liberation Sans" font-weight="bold" font-size="11" fill="#fff" text-anchor="middle">E</text></svg>
<div class="t" style="left:474px;top:352.87px;font-size:12.3px;color:#000;">Builder</div>
<div style="position:absolute;left:516px;top:349px;width:56px;height:22px;background:#f0f0f0;border:1px solid #a8a8a8;border-bottom:none;border-radius:2px 2px 0 0;box-sizing:border-box"></div>

<svg style="position:absolute;left:519px;top:352px" width="14" height="14" viewBox="0 0 14 14"><path d="M1 4l9-3 3 9-9 3z" fill="#f3e48a" stroke="#7ad03a"/><path d="M3 6l6-2M4 8.5l6-2M5 11l6-2" stroke="#c8a848" stroke-width=".8"/></svg>
<div class="t" style="left:537.5px;top:352.87px;font-size:12.3px;color:#000;">Notes</div>
<div style="position:absolute;left:573px;top:349px;width:85px;height:22px;background:#f0f0f0;border:1px solid #a8a8a8;border-bottom:none;border-radius:2px 2px 0 0;box-sizing:border-box"></div>

<svg style="position:absolute;left:576px;top:353px" width="14" height="14" viewBox="0 0 14 14"><rect x=".5" y=".5" width="13" height="13" rx="2" fill="#2eaa2a" stroke="#1a8018" stroke-width=".8"/><text x="7" y="11.5" font-family="Liberation Sans" font-weight="bold" font-size="11" fill="#fff" text-anchor="middle">E</text></svg>
<div class="t" style="left:594px;top:352.87px;font-size:12.3px;color:#000;">Elaboration</div>
<div style="position:absolute;left:659px;top:349px;width:50px;height:22px;background:#f0f0f0;border:1px solid #a8a8a8;border-bottom:none;border-radius:2px 2px 0 0;box-sizing:border-box"></div>

<svg style="position:absolute;left:662px;top:352px" width="15" height="15" viewBox="0 0 15 15"><circle cx="7.5" cy="7.5" r="7" fill="#fff" stroke="#b8c8ec" stroke-width="1"/><circle cx="7.5" cy="7.5" r="5.6" fill="url(#ghp)"/><text x="7.5" y="11.5" font-family="Liberation Sans" font-weight="bold" font-size="10" fill="#fff" text-anchor="middle">?</text></svg>
<div class="t" style="left:680.5px;top:352.87px;font-size:12.3px;color:#000;">Help</div>
<div class="t" style="left:347.5px;top:378.87px;font-size:12.3px;color:#000;">Show:</div>
<div style="position:absolute;left:382px;top:374px;width:89px;height:23px;background:#fff;border:1px solid #7a7a7a;box-sizing:border-box"></div>
<div class="t" style="left:385px;top:378.37px;font-size:12.3px;color:#000;">Sales Share</div>
<svg style="position:absolute;left:456px;top:383.5px" width="10" height="6" viewBox="0 0 10 6"><path d="M.5 .5l4.5 4.5 4.5-4.5" fill="none" stroke="#404040" stroke-width="1"/></svg>
<div style="position:absolute;left:790px;top:651px;width:122px;height:22px;background:#fff;border:1px solid #7a7a7a;box-sizing:border-box"></div>
<div class="t" style="left:793px;top:654.87px;font-size:12.3px;color:#000;">All years</div>
<svg style="position:absolute;left:897px;top:660.0px" width="10" height="6" viewBox="0 0 10 6"><path d="M.5 .5l4.5 4.5 4.5-4.5" fill="none" stroke="#404040" stroke-width="1"/></svg>
<svg style="position:absolute;left:0;top:0" width="1361" height="678"><rect x="388" y="433.5" width="783" height="184.5" fill="none" stroke="#d0d0d0" stroke-width="2"/><line x1="384" x2="1171" y1="578.7" y2="578.7" stroke="#d0d0d0" stroke-width="2"/><line x1="384" x2="1171" y1="539.5" y2="539.5" stroke="#d0d0d0" stroke-width="2"/><line x1="384" x2="1171" y1="500.2" y2="500.2" stroke="#d0d0d0" stroke-width="2"/><line x1="384" x2="1171" y1="460.9" y2="460.9" stroke="#d0d0d0" stroke-width="2"/><line x1="435.4" x2="435.4" y1="433.5" y2="628" stroke="#d0d0d0" stroke-width="2"/><line x1="506.6" x2="506.6" y1="433.5" y2="628" stroke="#d0d0d0" stroke-width="2"/><line x1="577.8" x2="577.8" y1="433.5" y2="628" stroke="#d0d0d0" stroke-width="2"/><line x1="649.0" x2="649.0" y1="433.5" y2="628" stroke="#d0d0d0" stroke-width="2"/><line x1="720.3" x2="720.3" y1="433.5" y2="628" stroke="#d0d0d0" stroke-width="2"/><line x1="791.5" x2="791.5" y1="433.5" y2="628" stroke="#d0d0d0" stroke-width="2"/><line x1="862.7" x2="862.7" y1="433.5" y2="628" stroke="#d0d0d0" stroke-width="2"/><line x1="933.9" x2="933.9" y1="433.5" y2="628" stroke="#d0d0d0" stroke-width="2"/><line x1="1005.1" x2="1005.1" y1="433.5" y2="628" stroke="#d0d0d0" stroke-width="2"/><line x1="1076.4" x2="1076.4" y1="433.5" y2="628" stroke="#d0d0d0" stroke-width="2"/><line x1="1147.6" x2="1147.6" y1="433.5" y2="628" stroke="#d0d0d0" stroke-width="2"/><line x1="388" x2="388" y1="433.5" y2="628" stroke="#d0d0d0" stroke-width="2"/><line x1="384" x2="388" y1="608.2" y2="608.2" stroke="#d0d0d0" stroke-width="1.5"/><line x1="384" x2="388" y1="598.4" y2="598.4" stroke="#d0d0d0" stroke-width="1.5"/><line x1="384" x2="388" y1="588.5" y2="588.5" stroke="#d0d0d0" stroke-width="1.5"/><line x1="384" x2="388" y1="568.9" y2="568.9" stroke="#d0d0d0" stroke-width="1.5"/><line x1="384" x2="388" y1="559.1" y2="559.1" stroke="#d0d0d0" stroke-width="1.5"/><line x1="384" x2="388" y1="549.3" y2="549.3" stroke="#d0d0d0" stroke-width="1.5"/><line x1="384" x2="388" y1="529.6" y2="529.6" stroke="#d0d0d0" stroke-width="1.5"/><line x1="384" x2="388" y1="519.8" y2="519.8" stroke="#d0d0d0" stroke-width="1.5"/><line x1="384" x2="388" y1="510.0" y2="510.0" stroke="#d0d0d0" stroke-width="1.5"/><line x1="384" x2="388" y1="490.4" y2="490.4" stroke="#d0d0d0" stroke-width="1.5"/><line x1="384" x2="388" y1="480.6" y2="480.6" stroke="#d0d0d0" stroke-width="1.5"/><line x1="384" x2="388" y1="470.7" y2="470.7" stroke="#d0d0d0" stroke-width="1.5"/><line x1="384" x2="388" y1="451.1" y2="451.1" stroke="#d0d0d0" stroke-width="1.5"/><line x1="384" x2="388" y1="441.3" y2="441.3" stroke="#d0d0d0" stroke-width="1.5"/><polygon points="387.90,519.83 411.64,518.69 435.38,517.50 459.12,516.25 482.86,514.96 506.60,513.60 530.34,512.18 554.08,510.70 577.82,509.15 601.56,507.54 625.30,505.85 649.04,504.08 672.78,502.24 696.52,500.31 720.26,498.30 744.00,496.19 767.74,493.99 791.48,491.69 815.22,489.29 838.96,486.78 862.70,484.15 886.44,481.41 910.18,478.54 933.92,475.54 957.66,472.40 981.40,469.13 1005.14,465.70 1028.88,462.11 1052.62,458.37 1076.36,454.45 1100.10,450.35 1123.84,446.06 1147.58,441.58 1171.32,436.89 1171.32,618 387.90,618" fill="#c8a585"/><polygon points="387.90,545.07 411.64,543.93 435.38,542.74 459.12,541.49 482.86,540.20 506.60,538.84 530.34,537.42 554.08,535.94 577.82,534.39 601.56,532.77 625.30,531.09 649.04,529.32 672.78,527.48 696.52,525.55 720.26,523.54 744.00,521.43 767.74,519.23 791.48,516.93 815.22,514.53 838.96,512.02 862.70,509.39 886.44,506.65 910.18,503.78 933.92,500.78 957.66,497.64 981.40,494.37 1005.14,490.94 1028.88,487.35 1052.62,483.60 1076.36,479.69 1100.10,475.59 1123.84,471.30 1147.58,466.82 1171.32,462.13 1171.32,618 387.90,618" fill="#b0a1a5"/><polygon points="387.90,569.05 411.64,567.91 435.38,566.72 459.12,565.48 482.86,564.18 506.60,562.82 530.34,561.40 554.08,559.92 577.82,558.37 601.56,556.76 625.30,555.07 649.04,553.30 672.78,551.46 696.52,549.53 720.26,547.52 744.00,545.41 767.74,543.21 791.48,540.92 815.22,538.51 838.96,536.00 862.70,533.38 886.44,530.63 910.18,527.76 933.92,524.76 957.66,521.63 981.40,518.35 1005.14,514.92 1028.88,511.34 1052.62,507.59 1076.36,503.67 1100.10,499.57 1123.84,495.28 1147.58,490.80 1171.32,486.11 1171.32,618 387.90,618" fill="#f5e44a"/><polygon points="387.90,579.00 411.64,577.86 435.38,576.67 459.12,575.42 482.86,574.12 506.60,572.77 530.34,571.35 554.08,569.87 577.82,568.32 601.56,566.70 625.30,565.01 649.04,563.25 672.78,561.40 696.52,559.48 720.26,557.46 744.00,555.36 767.74,553.16 791.48,550.86 815.22,548.46 838.96,545.95 862.70,543.32 886.44,540.58 910.18,537.71 933.92,534.71 957.66,531.57 981.40,528.29 1005.14,524.86 1028.88,521.28 1052.62,517.53 1076.36,513.61 1100.10,509.51 1123.84,505.23 1147.58,500.74 1171.32,496.06 1171.32,618 387.90,618" fill="#e5960f"/><polygon points="387.90,591.10 411.64,590.38 435.38,589.63 459.12,588.84 482.86,588.01 506.60,587.14 530.34,586.23 554.08,585.27 577.82,584.26 601.56,583.20 625.30,582.09 649.04,580.92 672.78,579.69 696.52,578.41 720.26,577.06 744.00,575.64 767.74,574.15 791.48,572.58 815.22,570.94 838.96,569.22 862.70,567.41 886.44,565.50 910.18,563.51 933.92,561.41 957.66,559.21 981.40,556.90 1005.14,554.47 1028.88,551.92 1052.62,549.25 1076.36,546.44 1100.10,543.49 1123.84,540.39 1147.58,537.14 1171.32,533.72 1171.32,618 387.90,618" fill="#c5532f"/><polygon points="387.90,603.67 411.64,602.95 435.38,602.20 459.12,601.41 482.86,600.58 506.60,599.71 530.34,598.79 554.08,597.83 577.82,596.82 601.56,595.77 625.30,594.65 649.04,593.49 672.78,592.26 696.52,590.97 720.26,589.62 744.00,588.20 767.74,586.71 791.48,585.15 815.22,583.51 838.96,581.78 862.70,579.97 886.44,578.07 910.18,576.07 933.92,573.98 957.66,571.78 981.40,569.46 1005.14,567.04 1028.88,564.49 1052.62,561.81 1076.36,559.00 1100.10,556.05 1123.84,552.96 1147.58,549.70 1171.32,546.29 1171.32,618 387.90,618" fill="#5da49f"/><line x1="1171" x2="1171" y1="433.5" y2="618" stroke="#d8d8d8" stroke-width="1"/><line x1="388" x2="1172" y1="618.75" y2="618.75" stroke="#d4d4d4" stroke-width="1.5"/></svg>
<div class="t" style="right:982px;top:572.60px;font-size:12.3px;color:#000;">40</div>
<div class="t" style="right:982px;top:533.33px;font-size:12.3px;color:#000;">80</div>
<div class="t" style="right:982px;top:494.06px;font-size:12.3px;color:#000;">120</div>
<div class="t" style="right:982px;top:454.80px;font-size:12.3px;color:#000;">160</div>
<div class="t" style="left:289.9px;width:200px;text-align:center;top:629.87px;font-size:12.3px;color:#000;">2017</div>
<div class="t" style="left:337.38px;width:200px;text-align:center;top:629.87px;font-size:12.3px;color:#000;">2019</div>
<div class="t" style="left:408.59999999999997px;width:200px;text-align:center;top:629.87px;font-size:12.3px;color:#000;">2022</div>
<div class="t" style="left:479.81999999999994px;width:200px;text-align:center;top:629.87px;font-size:12.3px;color:#000;">2025</div>
<div class="t" style="left:551.04px;width:200px;text-align:center;top:629.87px;font-size:12.3px;color:#000;">2028</div>
<div class="t" style="left:622.26px;width:200px;text-align:center;top:629.87px;font-size:12.3px;color:#000;">2031</div>
<div class="t" style="left:693.48px;width:200px;text-align:center;top:629.87px;font-size:12.3px;color:#000;">2034</div>
<div class="t" style="left:764.6999999999999px;width:200px;text-align:center;top:629.87px;font-size:12.3px;color:#000;">2037</div>
<div class="t" style="left:835.92px;width:200px;text-align:center;top:629.87px;font-size:12.3px;color:#000;">2040</div>
<div class="t" style="left:907.14px;width:200px;text-align:center;top:629.87px;font-size:12.3px;color:#000;">2043</div>
<div class="t" style="left:978.3599999999999px;width:200px;text-align:center;top:629.87px;font-size:12.3px;color:#000;">2046</div>
<div class="t" style="left:1049.58px;width:200px;text-align:center;top:629.87px;font-size:12.3px;color:#000;">2049</div>
<div class="t" style="left:670.5px;top:407.88px;font-size:14.5px;color:#000;">Cars: Sales Share</div>
<div style="position:absolute;left:1181px;top:406px;width:146px;height:115px;border:1px solid #d0d0d0;box-sizing:border-box"></div>
<svg style="position:absolute;left:1185px;top:411px" width="13" height="13" viewBox="0 0 13 13"><rect x="0" y="0" width="13" height="13" fill="#fff"/><path d="M.5 12.5V.5h12" fill="none" stroke="#808080"/><path d="M1.5 11.5V1.5h10" fill="none" stroke="#404040"/><path d="M3 6.2l2.5 2.6 4.5-5.8" fill="none" stroke="#000" stroke-width="2"/></svg>
<div style="position:absolute;left:1200px;top:411px;width:20px;height:14px;background:#c8a585;border:1px solid #a0a0a0;box-sizing:border-box"></div>
<div class="t" style="left:1227.5px;top:411.87px;font-size:12.3px;color:#000;">Engine Size 1800</div>
<svg style="position:absolute;left:1185px;top:429px" width="13" height="13" viewBox="0 0 13 13"><rect x="0" y="0" width="13" height="13" fill="#fff"/><path d="M.5 12.5V.5h12" fill="none" stroke="#808080"/><path d="M1.5 11.5V1.5h10" fill="none" stroke="#404040"/><path d="M3 6.2l2.5 2.6 4.5-5.8" fill="none" stroke="#000" stroke-width="2"/></svg>
<div style="position:absolute;left:1200px;top:429px;width:20px;height:14px;background:#b0a1a5;border:1px solid #a0a0a0;box-sizing:border-box"></div>
<div class="t" style="left:1227.5px;top:429.87px;font-size:12.3px;color:#000;">Engine Size 1600</div>
<svg style="position:absolute;left:1185px;top:447px" width="13" height="13" viewBox="0 0 13 13"><rect x="0" y="0" width="13" height="13" fill="#fff"/><path d="M.5 12.5V.5h12" fill="none" stroke="#808080"/><path d="M1.5 11.5V1.5h10" fill="none" stroke="#404040"/><path d="M3 6.2l2.5 2.6 4.5-5.8" fill="none" stroke="#000" stroke-width="2"/></svg>
<div style="position:absolute;left:1200px;top:447px;width:20px;height:14px;background:#f5e44a;border:1px solid #a0a0a0;box-sizing:border-box"></div>
<div class="t" style="left:1227.5px;top:447.87px;font-size:12.3px;color:#000;">Engine Size 1300</div>
<svg style="position:absolute;left:1185px;top:465px" width="13" height="13" viewBox="0 0 13 13"><rect x="0" y="0" width="13" height="13" fill="#fff"/><path d="M.5 12.5V.5h12" fill="none" stroke="#808080"/><path d="M1.5 11.5V1.5h10" fill="none" stroke="#404040"/><path d="M3 6.2l2.5 2.6 4.5-5.8" fill="none" stroke="#000" stroke-width="2"/></svg>
<div style="position:absolute;left:1200px;top:465px;width:20px;height:14px;background:#e5960f;border:1px solid #a0a0a0;box-sizing:border-box"></div>
<div class="t" style="left:1227.5px;top:465.87px;font-size:12.3px;color:#000;">Engine Size 1000</div>
<svg style="position:absolute;left:1185px;top:483px" width="13" height="13" viewBox="0 0 13 13"><rect x="0" y="0" width="13" height="13" fill="#fff"/><path d="M.5 12.5V.5h12" fill="none" stroke="#808080"/><path d="M1.5 11.5V1.5h10" fill="none" stroke="#404040"/><path d="M3 6.2l2.5 2.6 4.5-5.8" fill="none" stroke="#000" stroke-width="2"/></svg>
<div style="position:absolute;left:1200px;top:483px;width:20px;height:14px;background:#c5532f;border:1px solid #a0a0a0;box-sizing:border-box"></div>
<div class="t" style="left:1227.5px;top:483.87px;font-size:12.3px;color:#000;">Engine Size 800</div>
<svg style="position:absolute;left:1185px;top:501px" width="13" height="13" viewBox="0 0 13 13"><rect x="0" y="0" width="13" height="13" fill="#fff"/><path d="M.5 12.5V.5h12" fill="none" stroke="#808080"/><path d="M1.5 11.5V1.5h10" fill="none" stroke="#404040"/><path d="M3 6.2l2.5 2.6 4.5-5.8" fill="none" stroke="#000" stroke-width="2"/></svg>
<div style="position:absolute;left:1200px;top:501px;width:20px;height:14px;background:#5da49f;border:1px solid #a0a0a0;box-sizing:border-box"></div>
<div class="t" style="left:1227.5px;top:501.87px;font-size:12.3px;color:#000;">Engine Size 660</div>
<svg style="position:absolute;left:1337px;top:404px" width="17" height="17" viewBox="0 0 17 17"><circle cx="8" cy="8" r="7" fill="#a0c8e8"/><path d="M8 8V1a7 7 0 0 1 7 7z" fill="#60b030"/><path d="M8 8H1a7 7 0 0 1 7-7z" fill="#f08020"/><path d="M2 9h14l-7 7z" fill="#000"/></svg>
<svg style="position:absolute;left:1337px;top:426px" width="17" height="16" viewBox="0 0 17 16"><circle cx="5.5" cy="6" r="4.5" fill="#e03a2a"/><circle cx="10.5" cy="5" r="4.5" fill="#40b040"/><circle cx="8" cy="10.5" r="4.5" fill="#3a90e0"/></svg>
<div class="t" style="left:1338px;top:450px;font-size:11.5px;letter-spacing:0;transform-origin:0 0;transform:translate(14px,0) rotate(90deg);color:#000">LOG</div>
<div class="t" style="left:1338px;top:485px;font-size:11.5px;letter-spacing:0;transform-origin:0 0;transform:translate(14px,0) rotate(90deg);color:#c8c8c8">3D</div>
<div style="position:absolute;left:1335px;top:507px;width:22px;height:21px;background:#fcfcfc;border:1px solid #c0c0c0;border-right:none;box-sizing:border-box"></div>
<svg style="position:absolute;left:1340px;top:512px" width="15" height="14" viewBox="0 0 15 14"><rect x=".5" y=".5" width="14" height="13" fill="#fff" stroke="#000"/><rect x="2" y="3" width="2" height="2" fill="#e02020"/><rect x="2" y="6" width="2" height="2" fill="#2040e0"/><rect x="2" y="9" width="2" height="2" fill="#20c020"/><path d="M5 4h8M5 7h8M5 10h8" stroke="#000" stroke-width="1.4"/></svg>
<svg style="position:absolute;left:1338px;top:531px" width="17" height="18" viewBox="0 0 17 18"><path d="M5.5 1.5v15M11.5 1.5v15M1.5 5.5h14M1.5 11.5h14" stroke="#a82000" stroke-width="3.4" stroke-linecap="square"/><path d="M5.5 2v14M11.5 2v14M2 5.5h13M2 11.5h13" stroke="#f86818" stroke-width="1.4"/></svg>
<svg style="position:absolute;left:1338px;top:555px" width="17" height="10" viewBox="0 0 17 10"><rect x="0" y="0" width="17" height="9.5" fill="#f4f000"/><text x="8.5" y="8" font-family="Liberation Sans" font-weight="bold" font-size="8" fill="#000" text-anchor="middle" letter-spacing="-.3">12.5</text></svg>
<svg style="position:absolute;left:1339px;top:576px" width="16" height="16" viewBox="0 0 16 16"><text x="1" y="15.5" font-family="Liberation Serif" font-weight="bold" font-size="14" fill="#000">A</text><path d="M2.5 7Q3 1.5 8 1.5T13.5 6" fill="none" stroke="#000" stroke-width="1.8"/><path d="M10.5 5.5h6l-3 3.5z" fill="#000"/></svg>
<svg style="position:absolute;left:1338px;top:598px" width="16" height="16" viewBox="0 0 16 16"><path d="M4 1l6-1 3 5H5z" fill="#e8f0f8" stroke="#8098b0" stroke-width=".7"/><rect x=".5" y="5" width="15" height="6" rx="1.5" fill="#d0d4d8" stroke="#8a9098" stroke-width=".8"/><rect x="2.5" y="10.5" width="11" height="4" fill="#f0f0f0" stroke="#8a9098" stroke-width=".8"/><rect x="11.5" y="7" width="2" height="1.2" fill="#30a030"/></svg>
<svg style="position:absolute;left:1348px;top:637px" width="7" height="10" viewBox="0 0 7 10"><path d="M.5 1l3 3 3-3M.5 5.5l3 3 3-3" fill="none" stroke="#000" stroke-width="1.3"/></svg>
<div style="position:absolute;left:770px;top:244px;width:376px;height:207px;background:#f0f0f0;border:1px solid #5a666e;box-sizing:border-box;box-shadow:0 0 12px 3px rgba(0,0,0,0.22)"></div>
<div style="position:absolute;left:771px;top:245px;width:374px;height:25px;background:#fff"></div>
<div class="t" style="left:774.5px;top:249.87px;font-size:12.3px;color:#000;">Error</div>
<svg style="position:absolute;left:1125px;top:252px" width="11" height="11" viewBox="0 0 11 11"><path d="M.5 .5l10 10M10.5 .5l-10 10" stroke="#000" stroke-width="1.05"/></svg>
<svg style="position:absolute;left:783px;top:285px" width="34" height="34" viewBox="0 0 34 34"><defs><radialGradient id="ge" cx=".35" cy=".3" r=".8"><stop offset="0" stop-color="#e85858"/><stop offset=".6" stop-color="#b81010"/><stop offset="1" stop-color="#a00808"/></radialGradient></defs><circle cx="16.2" cy="15.8" r="15.5" fill="#fff" stroke="#888" stroke-width="1"/><circle cx="16.2" cy="15.8" r="13.8" fill="url(#ge)"/><path d="M9.2 8.8l14 14M23.2 8.8l-14 14" stroke="#e4e6e6" stroke-width="3.8"/></svg>
<div class="t" style="left:830.5px;top:285.97px;font-size:12.3px;color:#000;">Result of -97.24 is less than minimum of 0.00 in year 2050.</div>
<div class="t" style="left:830.5px;top:315.97px;font-size:12.3px;color:#000;">Branch: Demand\Cars\Engine Size 800</div>
<div class="t" style="left:830.5px;top:330.97px;font-size:12.3px;color:#000;">Variable: Sales Share</div>
<div class="t" style="left:830.5px;top:345.97px;font-size:12.3px;color:#000;">Scenario: Business As Usual</div>
<div class="t" style="left:830.5px;top:360.97px;font-size:12.3px;color:#000;">Year: 2050</div>
<div class="t" style="left:830.5px;top:375.97px;font-size:12.3px;color:#000;">Expression: Remainder(100)</div>
<div style="position:absolute;left:921px;top:410px;width:73px;height:24px;background:#e1e1e1;border:2px solid #0a74d8;box-sizing:border-box"></div>
<div style="position:absolute;left:923px;top:412px;width:69px;height:20px;border:1px dotted #000;box-sizing:border-box"></div>
<div class="t" style="left:857px;width:200px;text-align:center;top:415.37px;font-size:12.3px;color:#000;">OK</div>
</body></html>
